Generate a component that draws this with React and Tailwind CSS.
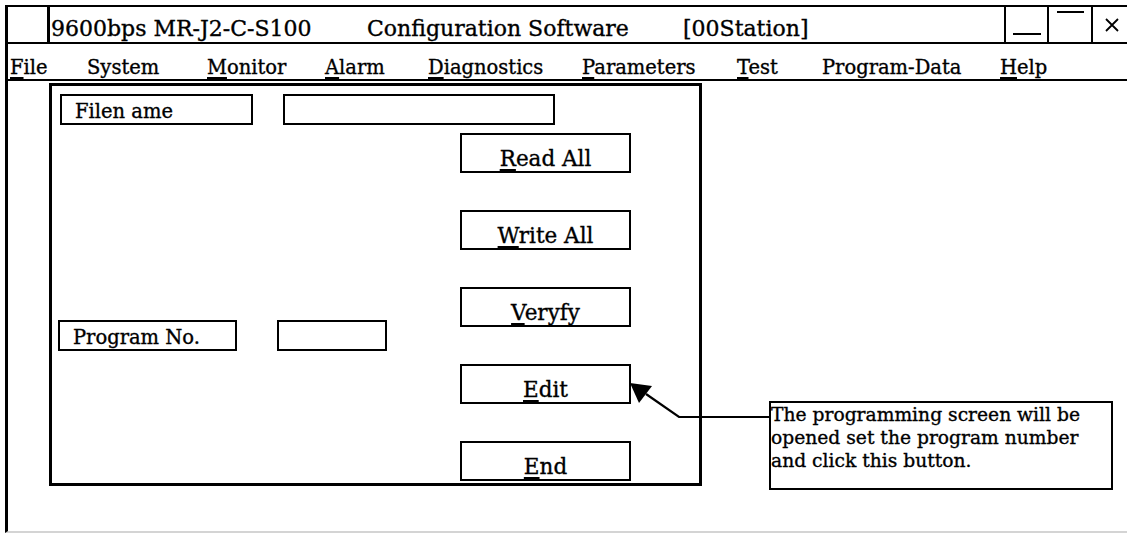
import React from 'react';

const MenuItem = ({ hot, rest, width }) => (
  <div className={width}>
    {hot ? (
      <span className="underline decoration-[1.5px] underline-offset-[3px]">{hot}</span>
    ) : null}
    {rest}
  </div>
);

const Button = ({ hot, rest }) => (
  <div className="w-[171px] h-[40px] border-2 border-black text-center pt-[11px] text-[21.5px] leading-[25px]">
    <span className="underline decoration-[1.5px] underline-offset-[3px]">{hot}</span>
    {rest}
  </div>
);

const App = () => {
  return (
    <div className="relative w-[1127px] h-[533px] overflow-hidden bg-white text-black font-['DejaVu_Serif',serif] [-webkit-text-stroke:0.35px_black]">
      <div className="ml-[5px] mt-[5px] w-[1140px] h-[528px] border-l-[3px] border-t-2 border-b-2 border-black border-b-[#d4d4d4]">
        {/* title bar */}
        <div className="flex h-[37px] border-b-2 border-black">
          <div className="w-[42px] border-r-[3px] border-black" />
          <div className="flex w-[954px] pl-[1px] pt-[9px] text-[22px] leading-[26px] whitespace-nowrap">
            <span className="w-[316px]">9600bps MR-J2-C-S100</span>
            <span className="w-[316px]">Configuration Software</span>
            <span>[00Station]</span>
          </div>
          <div className="flex w-[43px] items-end justify-center pb-[7px] border-l-2 border-black">
            <span className="block w-[28px] h-[2px] bg-black" />
          </div>
          <div className="flex w-[44px] justify-center pt-[4px] border-l-2 border-black">
            <span className="block w-[27px] h-[2px] bg-black" />
          </div>
          <div className="flex flex-1 items-center pl-[12px] border-l-2 border-black">
            <svg width="14" height="14" viewBox="0 0 14 14">
              <path d="M1 1 L13 13 M13 1 L1 13" stroke="black" strokeWidth="1.8" fill="none" />
            </svg>
          </div>
        </div>

        {/* menu bar */}
        <div className="flex h-[37px] border-b-2 border-black pl-[2px] pt-[12px] text-[19.5px] leading-[23px] whitespace-nowrap">
          <MenuItem hot="F" rest="ile" width="w-[77px]" />
          <MenuItem rest="System" width="w-[120px]" />
          <MenuItem hot="M" rest="onitor" width="w-[118px]" />
          <MenuItem hot="A" rest="larm" width="w-[103px]" />
          <MenuItem hot="D" rest="iagnostics" width="w-[154px]" />
          <MenuItem hot="P" rest="arameters" width="w-[155px]" />
          <MenuItem hot="T" rest="est" width="w-[85px]" />
          <MenuItem rest="Program-Data" width="w-[178px]" />
          <MenuItem hot="H" rest="elp" width="w-[60px]" />
        </div>

        {/* body */}
        <div className="flex">
          <div className="ml-[41px] mt-[2px] w-[653px] h-[403px] border-[3px] border-black text-[19.5px] leading-[23px]">
            <div className="flex mt-[8px]">
              <div className="ml-[8px] w-[193px] h-[31px] border-2 border-black pl-[13px] pt-[4px]">Filen ame</div>
              <div className="ml-[30px] w-[272px] h-[31px] border-2 border-black" />
            </div>
            <div className="flex mt-[8px]">
              <div className="w-[408px]">
                <div className="flex mt-[187px]">
                  <div className="ml-[6px] w-[179px] h-[31px] border-2 border-black pl-[13px] pt-[4px] whitespace-nowrap">Program No.</div>
                  <div className="ml-[40px] w-[110px] h-[31px] border-2 border-black" />
                </div>
              </div>
              <div className="flex flex-col gap-[37px]">
                <Button hot="R" rest="ead All" />
                <Button hot="W" rest="rite All" />
                <Button hot="V" rest="eryfy" />
                <Button hot="E" rest="dit" />
                <Button hot="E" rest="nd" />
              </div>
            </div>
          </div>

          <div className="ml-[67px] mt-[320px] w-[344px] h-[89px] border-2 border-black text-[18.7px] leading-[23px] whitespace-nowrap">
            The programming screen will be
            <br />
            opened set the program number
            <br />
            and click this button.
          </div>
        </div>
      </div>

      {/* leader arrow from the note to the Edit button */}
      <svg className="absolute left-0 top-0 pointer-events-none" width="1127" height="533" viewBox="0 0 1127 533">
        <polyline points="646,394 679,417 769,417" fill="none" stroke="black" strokeWidth="2.2" />
        <polygon points="630,383 652,386 639,403" fill="black" />
      </svg>
    </div>
  );
};

export default App;
